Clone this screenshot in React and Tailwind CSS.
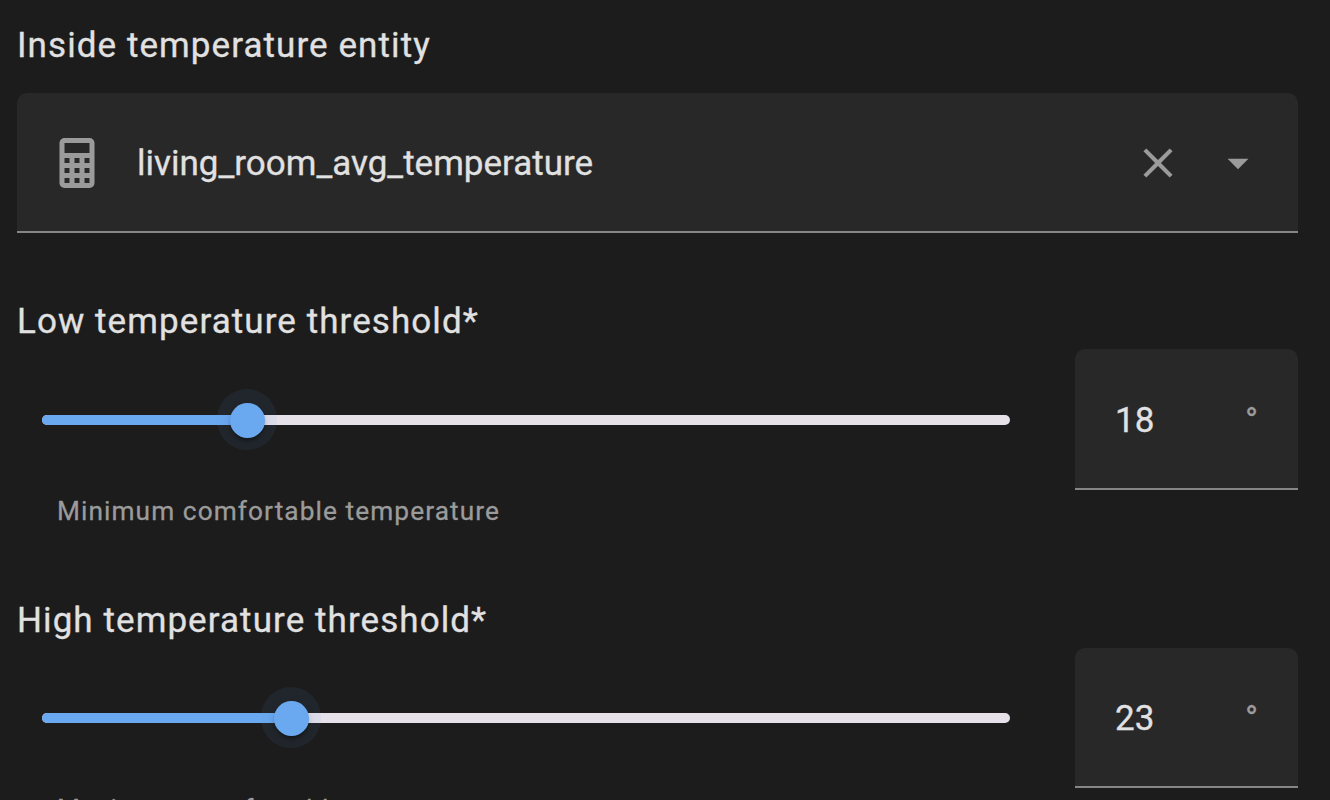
import React from 'react';

const thresholds = [
  { id: 'low', label: 'Low temperature threshold*', value: 18, fill: 205.5, boxHeight: 141, helper: 'Minimum comfortable temperature' },
  { id: 'high', label: 'High temperature threshold*', value: 23, fill: 249.5, boxHeight: 140, helper: 'Maximum comfortable temperature' },
];

function Icon({ path, className }) {
  return (
    <svg viewBox="0 0 24 24" fill="currentColor" className={className}>
      <path d={path} />
    </svg>
  );
}

const calculatorPath =
  'M7,2H17A2,2 0 0,1 19,4V20A2,2 0 0,1 17,22H7A2,2 0 0,1 5,20V4A2,2 0 0,1 7,2M7,4V8H17V4H7M7,10V12H9V10H7M11,10V12H13V10H11M15,10V12H17V10H15M7,14V16H9V14H7M11,14V16H13V14H11M15,14V16H17V14H15M7,18V20H9V18H7M11,18V20H13V18H11M15,18V20H17V18H15Z';
const closePath =
  'M19,6.41L17.59,5L12,10.59L6.41,5L5,6.41L10.59,12L5,17.59L6.41,19L12,13.41L17.59,19L19,17.59L13.41,12L19,6.41Z';
const menuDownPath = 'M7,10L12,15L17,10H7Z';

function Slider({ fill }) {
  return (
    <div className="relative w-[968px] h-2.5 mb-[65px] rounded-[5px] bg-[#e6e0e9]">
      <div className="h-2.5 rounded-l-[5px] bg-[#6aa8ef]" style={{ width: fill }}></div>
      {/* Halo and thumb sit on top of the track */}
      <div
        className="absolute -top-[26px] -ml-[30.5px] w-[60px] h-[61px] pt-px rounded-full bg-[#6aa8ef]/8 flex items-center justify-center"
        style={{ left: fill }}
      >
        <div className="w-[35px] h-[35px] mt-px ml-px rounded-full bg-[#6aa8ef] shadow-[0_5px_3px_-3px_rgba(0,0,0,0.2),0_3px_3px_rgba(0,0,0,0.14),0_3px_8px_rgba(0,0,0,0.12)]"></div>
      </div>
    </div>
  );
}

function ThresholdField({ label, value, fill, boxHeight, helper }) {
  return (
    <section className="h-[299px]">
      <h2 className="h-[49px] pt-0.5 text-[35px] leading-[40px] tracking-[1.075px] whitespace-nowrap">{label}</h2>
      <div className="flex items-end justify-between pl-[25px]">
        <Slider fill={fill} />
        <div
          className="w-[223px] px-10 pb-10 rounded-t-[10px] bg-[#282828] border-b-2 border-[#868686] flex items-end justify-between text-[35px] leading-[53px]"
          style={{ height: boxHeight }}
        >
          <span className="pb-px">{value}</span>
          <span className="text-[#9b9b9b]">°</span>
        </div>
      </div>
      <p className="pl-10 pt-1.5 text-[26.25px] leading-[30px] tracking-[1.08px] text-[#9b9b9b] whitespace-nowrap">{helper}</p>
    </section>
  );
}

function App() {
  return (
    <div className="h-[800px] overflow-hidden bg-[#1c1c1c] text-[#e1e1e1] font-['Roboto',sans-serif] [-webkit-text-stroke:0.3px_currentColor] pl-[17px] pr-8">
      <h2 className="h-[93px] pt-[26px] text-[35px] leading-[40px] tracking-[1.075px] whitespace-nowrap">
        Inside temperature entity
      </h2>

      <div className="h-[140px] mb-[67px] pl-[30px] pr-[35px] pt-0.5 rounded-t-[10px] bg-[#282828] border-b-2 border-[#868686] flex items-center">
        <Icon path={calculatorPath} className="w-[60px] h-[60px] text-[#9b9b9b]" />
        <span className="ml-[30px] pt-0.5 flex-1 text-[35px] leading-[40px]">living_room_avg_temperature</span>
        <div className="flex gap-[30px] text-[#9b9b9b]">
          <Icon path={closePath} className="w-[50px] h-[50px]" />
          <Icon path={menuDownPath} className="w-[50px] h-[50px]" />
        </div>
      </div>

      {thresholds.map((t) => (
        <ThresholdField key={t.id} {...t} />
      ))}
    </div>
  );
}

export default App;
